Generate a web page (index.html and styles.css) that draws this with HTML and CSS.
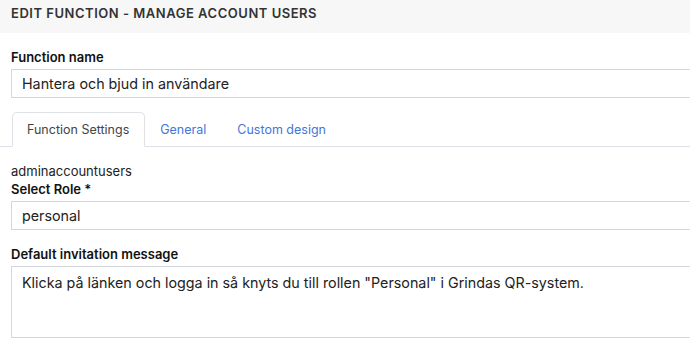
FILE: index.html
```html
<!DOCTYPE html>
<html lang="sv">
<head>
  <meta charset="UTF-8" />
  <meta name="viewport" content="width=device-width, initial-scale=1.0"/>
  <title>Edit function</title>
  <link rel="stylesheet" href="styles.css">
</head>
<body>

  <div class="page-header">
    <h1>Edit function - Manage account users</h1>
  </div>

  <div class="content">
    <label class="field-label" for="fn-name">Function name</label>
    <input class="field" type="text" id="fn-name" value="Hantera och bjud in användare"/>

    <ul class="tabs">
      <li class="tab active">Function Settings</li>
      <li class="tab">General</li>
      <li class="tab">Custom design</li>
    </ul>

    <div class="code">adminaccountusers</div>
    <label class="field-label" for="role">Select Role *</label>
    <div class="field select" id="role">personal</div>

    <label class="field-label gap" for="msg">Default invitation message</label>
    <textarea class="field area" id="msg">Klicka på länken och logga in så knyts du till rollen "Personal" i Grindas QR-system.</textarea>
  </div>

</body>
</html>
```

FILE: styles.css
```css
body {
  margin: 0;
  font-family: Inter, "Noto Sans", sans-serif;
  color: #1f2328;
  background: white;
  overflow: hidden;
}
.page-header {
  background: #f7f7f7;
  height: 33px;
  box-sizing: border-box;
  padding: 5px 11px 0;
}
.page-header h1 {
  margin: 0;
  font-size: 13px;
  line-height: 16px;
  font-weight: 600;
  letter-spacing: 0.04em;
  text-transform: uppercase;
  color: #333;
}
.content {
  padding: 15px 0 0 11px;
  width: 720px;
}
.field-label {
  display: block;
  font-size: 13px;
  font-weight: 600;
  color: #111;
  line-height: 18px;
  margin-bottom: 3px;
}
.field-label.gap {
  margin-top: 15px;
}
.field {
  display: block;
  box-sizing: border-box;
  width: 100%;
  height: 29px;
  border: 1px solid #d3d8df;
  padding: 0 10px;
  font-family: Inter, "Noto Sans", sans-serif;
  font-size: 14.3px;
  color: #222;
  line-height: 27px;
  background: white;
}
.area {
  height: 72px;
  padding-top: 2px;
  resize: none;
  line-height: 28px;
}
.tabs {
  list-style: none;
  display: flex;
  margin: 14px 0 15px -11px;
  padding: 0 0 0 12px;
  border-bottom: 1px solid #dee2e6;
  width: calc(100% + 11px);
}
.tab {
  font-size: 12.5px;
  color: #4476d6;
  padding: 0 15px 0 14px;
  height: 33px;
  line-height: 33px;
  border: 1px solid transparent;
  border-radius: 5px 5px 0 0;
  margin-bottom: -1px;
}
.tab.active {
  color: #444;
  border-color: #dee2e6 #dee2e6 white;
  background: white;
}
.code {
  font-size: 13px;
  color: #222;
  line-height: 18px;
}
```
